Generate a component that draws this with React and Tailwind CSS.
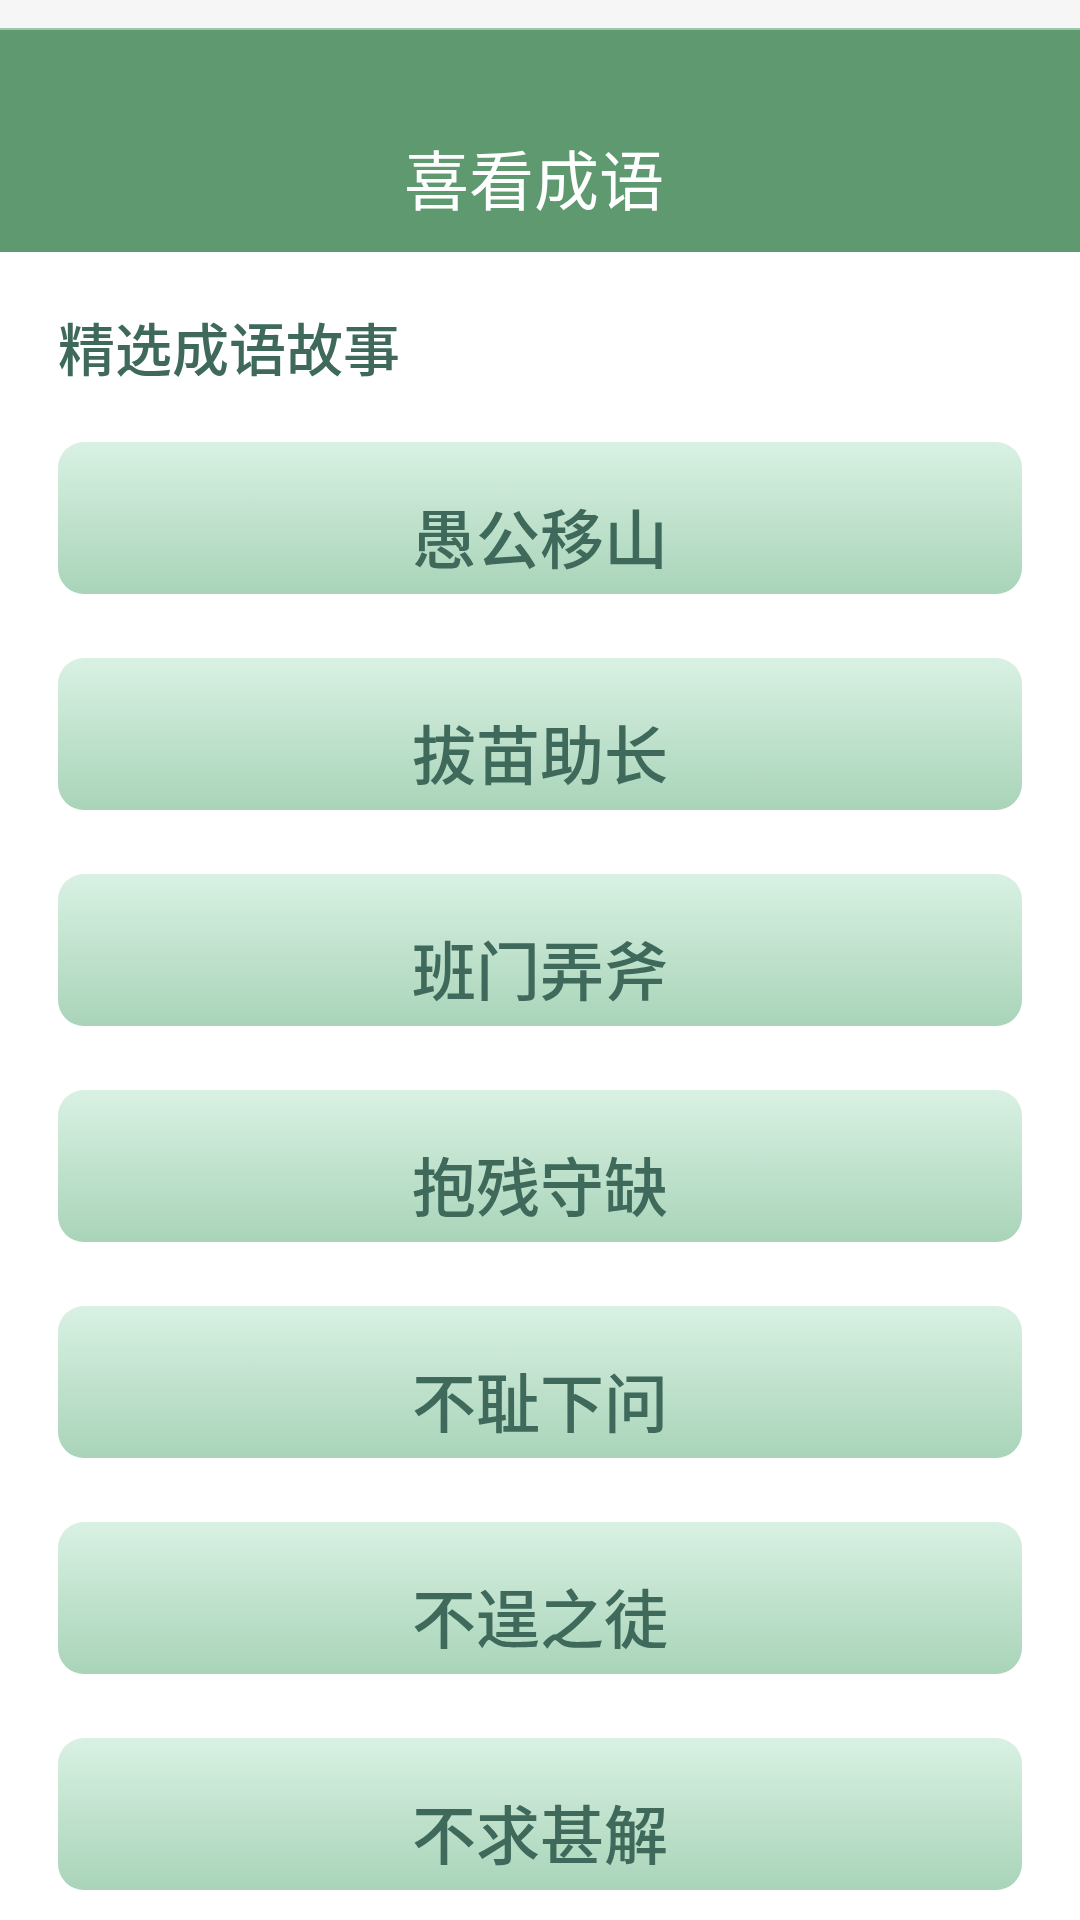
import React from 'react';

const idioms = ['愚公移山', '拔苗助长', '班门弄斧', '抱残守缺', '不耻下问', '不逞之徒', '不求甚解'];

export default function App() {
  return (
    <div
      className="w-[1080px] h-[1920px] overflow-hidden bg-white"
      style={{ fontFamily: '"Noto Sans CJK SC", "Noto Sans", sans-serif' }}
    >
      {/* 状态栏 */}
      <div className="h-[28px] bg-[#f6f6f6]" />

      {/* 标题栏 */}
      <header className="h-[224px] bg-[#5e9970] border-t-2 border-[#9cc6ac] flex items-center justify-center pt-[72px] pr-[12px]">
        <h1 className="text-[65px] leading-none font-normal text-white">喜看成语</h1>
      </header>

      {/* 内容 */}
      <main className="px-[58px]">
        <h2 className="mt-[66px] text-[57px] leading-none font-medium text-[#3f6a5b]">精选成语故事</h2>
        <div className="mt-[67px] flex flex-col gap-[64px]">
          {idioms.map((name) => (
            <button
              key={name}
              className="h-[152px] w-full rounded-[26px] bg-gradient-to-b from-[#d9f1e3] to-[#a9d4b9] flex items-center justify-center pt-[34px]"
            >
              <span className="text-[64px] leading-none font-medium text-[#3f6a5b]">{name}</span>
            </button>
          ))}
        </div>
      </main>
    </div>
  );
}
